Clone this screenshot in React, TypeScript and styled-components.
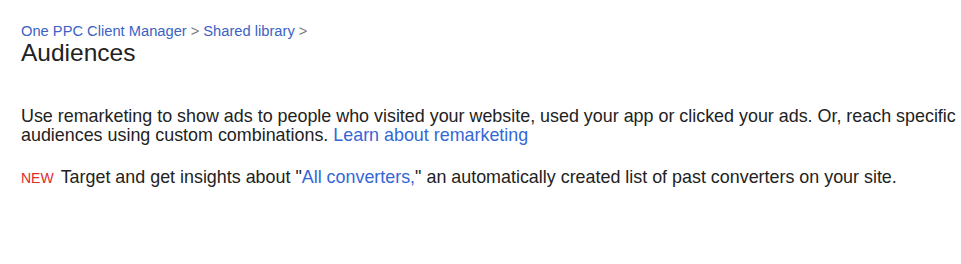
import styled, { createGlobalStyle } from "styled-components";

const GlobalStyle = createGlobalStyle`
	html, body {
		margin: 0;
		padding: 0;
		background: #ffffff;
	}
	body {
		font-family: "Liberation Sans", Arial, sans-serif;
		color: #222222;
	}
`;

const Page = styled.div`
	padding: 23px 0 0 21px;
`;

const Breadcrumbs = styled.nav`
	display: flex;
	align-items: baseline;
	gap: 4px;
	font-size: 14.7px;
	line-height: 17px;
	color: #777777;
`;

const Crumb = styled.a`
	color: #3b63c4;
	text-decoration: none;
`;

const Title = styled.h1`
	margin: 0;
	font-size: 24.5px;
	font-weight: normal;
	line-height: 26px;
	color: #222222;
`;

const Paragraph = styled.p<{ $gap?: number }>`
	margin: ${({ $gap }) => $gap ?? 0}px 0 0;
	font-size: 17.9px;
	line-height: 19px;
	color: #222222;
	white-space: nowrap;
`;

const Link = styled.a`
	color: #3367d6;
	text-decoration: none;
`;

const NewBadge = styled.span`
	color: #dd2c2c;
	font-size: 14px;
	margin-right: 7px;
`;

export default function App() {
	return (
		<>
			<GlobalStyle />
			<Page>
				<Breadcrumbs>
					<Crumb href="#">One PPC Client Manager</Crumb>
					<span>&gt;</span>
					<Crumb href="#">Shared library</Crumb>
					<span>&gt;</span>
				</Breadcrumbs>
				<Title>Audiences</Title>
				<Paragraph $gap={41}>
					Use remarketing to show ads to people who visited your website, used
					your app or clicked your ads. Or, reach specific
					<br />
					audiences using custom combinations.{" "}
					<Link href="#">Learn about remarketing</Link>
				</Paragraph>
				<Paragraph $gap={23}>
					<NewBadge>NEW</NewBadge>
					Target and get insights about "<Link href="#">All converters,</Link>"
					an automatically created list of past converters on your site.
				</Paragraph>
			</Page>
		</>
	);
}
